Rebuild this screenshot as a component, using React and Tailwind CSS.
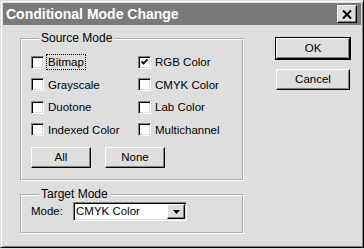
import React from "react";

const raised =
  "bg-[#dedede] border border-t-white border-l-white border-r-black border-b-black shadow-[inset_-1px_-1px_0_#808080]";

function CheckBox({ checked }) {
  return (
    <span className="w-[13px] h-[13px] shrink-0 bg-white border border-t-[#808080] border-l-[#808080] border-r-white border-b-white shadow-[inset_1px_1px_0_#000,inset_-1px_-1px_0_#dedede] flex items-center justify-center">
      {checked && (
        <svg width="9" height="9" viewBox="0 0 9 9">
          <path d="M1.5 3.5 L3.5 5.5 L7.5 1.5" fill="none" stroke="#000" strokeWidth="1.8" />
        </svg>
      )}
    </span>
  );
}

function Option({ label, checked, focused }) {
  return (
    <div className="flex items-center gap-[3px] h-[22.5px]">
      <CheckBox checked={checked} />
      <span
        className={
          "px-[1px] leading-[14px] " +
          (focused ? "outline outline-1 outline-dotted outline-black" : "")
        }
      >
        {label}
      </span>
    </div>
  );
}

function Button({ children, isDefault, className }) {
  return (
    <button
      className={
        raised +
        " flex items-center justify-center text-[11.5px] text-black " +
        (isDefault ? "outline outline-1 outline-black " : "") +
        className
      }
    >
      {children}
    </button>
  );
}

export default function App() {
  return (
    <div className="w-[364px] h-[249px] bg-[#dedede] font-['Liberation_Sans',Arial,sans-serif] text-black">
      <div className="w-[364px] h-[248px] border border-t-[#dedede] border-l-[#dedede] border-r-black border-b-black shadow-[inset_1px_1px_0_#fff,inset_-1px_-1px_0_#808080] p-[2px] flex flex-col">
        {/* Title bar */}
        <div className="h-[22px] bg-[#7a7a7a] flex items-center justify-between pl-[3px] pr-[4px]">
          <span className="text-white font-bold text-[14px] leading-none">Conditional Mode Change</span>
          <span className={raised + " w-[20px] h-[18px] flex items-center justify-center"}>
            <svg width="10" height="9" viewBox="0 0 10 9">
              <path d="M1 0.5 L9 8.5 M9 0.5 L1 8.5" stroke="#000" strokeWidth="2" />
            </svg>
          </span>
        </div>

        {/* Body */}
        <div className="flex pl-[17px] pt-[7px]">
          <div className="w-[224px] flex flex-col">
            <fieldset className="[border-style:groove] border-2 border-white pl-[9px] pt-[6px] pb-[11px]">
              <legend className="ml-[8px] px-[2px] text-[12px] leading-[13px] bg-[#dedede]">Source Mode</legend>
              <div className="grid grid-cols-[107px_1fr] text-[11.5px]">
                <Option label="Bitmap" focused />
                <Option label="RGB Color" checked />
                <Option label="Grayscale" />
                <Option label="CMYK Color" />
                <Option label="Duotone" />
                <Option label="Lab Color" />
                <Option label="Indexed Color" />
                <Option label="Multichannel" />
              </div>
              <div className="flex gap-[14px] mt-[6px]">
                <Button className="w-[60px] h-[21px]">All</Button>
                <Button className="w-[60px] h-[21px]">None</Button>
              </div>
            </fieldset>

            <fieldset className="[border-style:groove] border-2 border-white pl-[9px] pt-[1px] pb-[11px] mt-[7px]">
              <legend className="ml-[8px] px-[2px] text-[12px] leading-[13px] bg-[#dedede]">Target Mode</legend>
              <div className="flex items-center text-[11.5px]">
                <span className="w-[42px]">Mode:</span>
                <div className="w-[114px] h-[19px] bg-white border border-t-[#808080] border-l-[#808080] border-r-white border-b-white shadow-[inset_1px_1px_0_#000,inset_-1px_-1px_0_#dedede] flex items-center justify-between pl-[2px] pr-[1px]">
                  <span className="leading-none">CMYK Color</span>
                  <span className={raised + " w-[18px] h-[15px] flex items-center justify-center"}>
                    <svg width="7" height="4" viewBox="0 0 7 4">
                      <path d="M0 0 H7 L3.5 4 Z" fill="#000" />
                    </svg>
                  </span>
                </div>
              </div>
            </fieldset>
          </div>

          <div className="ml-[32px] pt-[6px] flex flex-col gap-[10px]">
            <Button isDefault className="w-[74px] h-[21px]">OK</Button>
            <Button className="w-[74px] h-[21px]">Cancel</Button>
          </div>
        </div>
      </div>
    </div>
  );
}
